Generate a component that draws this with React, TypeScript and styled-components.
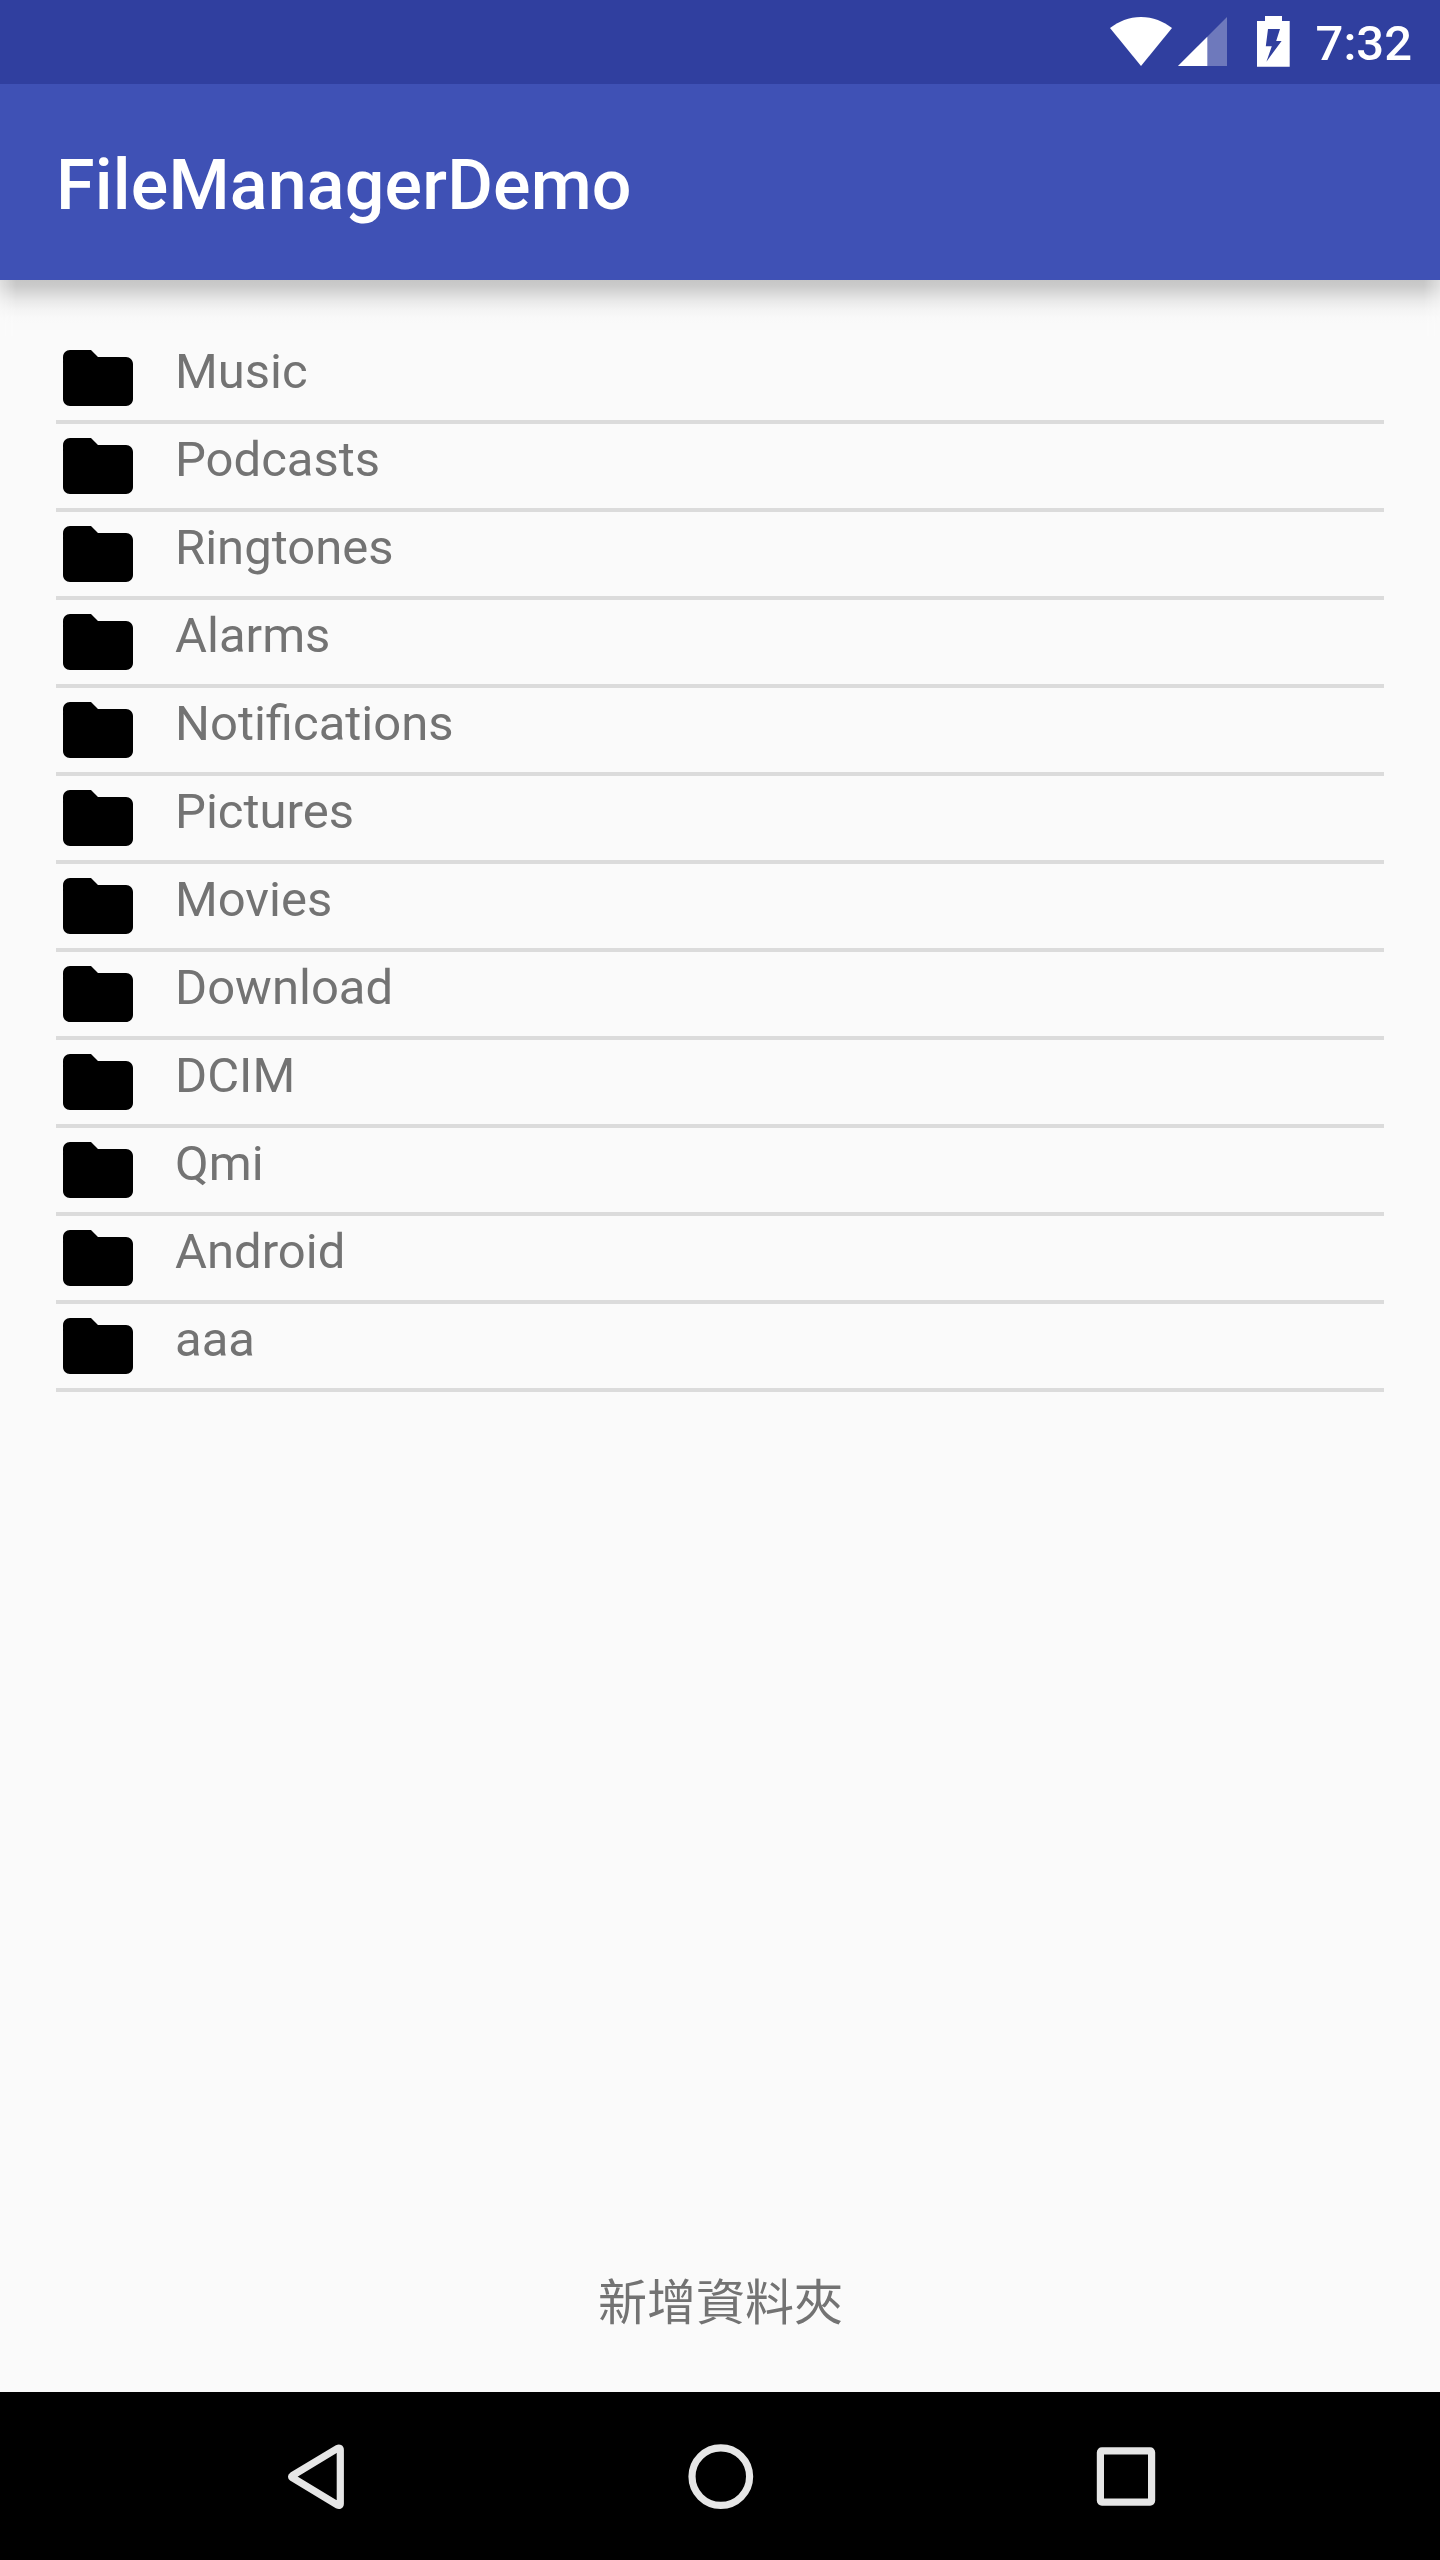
import React from "react";
import styled, { createGlobalStyle } from "styled-components";

const GlobalStyle = createGlobalStyle`
  html, body { margin: 0; padding: 0; background: #fafafa; }
`;

const Screen = styled.div`
  width: 1440px;
  height: 2560px;
  display: flex;
  flex-direction: column;
  overflow: hidden;
  background: #fafafa;
  color: #737373;
  font-family: Roboto, "Noto Sans CJK TC", sans-serif;
  font-size: 49px;
`;

const StatusBar = styled.header`
  flex: none;
  height: 84px;
  box-sizing: border-box;
  padding-right: 28px;
  display: flex;
  justify-content: flex-end;
  background: #303f9f;
  color: #fff;
`;

const StatusIcons = styled.svg`
  display: block;
  width: 210px;
  height: 84px;
`;

const Clock = styled.time`
  width: 102px;
  padding-top: 15px;
  line-height: 58px;
  font-weight: 500;
  text-align: right;
`;

const AppBar = styled.div`
  flex: none;
  height: 196px;
  box-sizing: border-box;
  padding: 6px 56px 0;
  display: flex;
  align-items: center;
  background: #3f51b5;
`;

const Title = styled.h1`
  margin: 0;
  color: #fff;
  font-size: 70px;
  font-weight: 500;
  line-height: 82px;
  letter-spacing: 0.17px;
`;

const Shadow = styled.div`
  flex: none;
  height: 56px;
  background: linear-gradient(#c6c6c6 0, #cbcbcb 6px, #d9d9d9 13px, #e9e9e9 21px, #f4f4f4 30px, #f9f9f9 38px, #fafafa 44px);
  mask-image: linear-gradient(90deg, rgba(0, 0, 0, 0.5), #000 16px, #000 calc(100% - 16px), rgba(0, 0, 0, 0.5));
`;

const FileList = styled.ul`
  flex: 1;
  margin: 0;
  padding: 0 56px;
  list-style: none;
`;

const FileRow = styled.li`
  height: 84px;
  display: flex;
  align-items: flex-start;
  border-bottom: 4px solid #dbdbdb;
`;

const FolderIcon = styled.svg`
  display: block;
  width: 84px;
  height: 84px;
  margin-right: 35px;
`;

const FileName = styled.span`
  padding-top: 7px;
  line-height: 58px;
`;

const AddFolder = styled.button`
  flex: none;
  height: 180px;
  padding: 0 0 7px 1px;
  border: 0;
  background: none;
  color: inherit;
  font: inherit;
`;

const NavBar = styled.nav`
  flex: none;
  height: 168px;
  display: flex;
  justify-content: center;
  background: #000;
`;

const NavIcon = styled.svg`
  display: block;
  width: 405px;
  height: 168px;
  fill: none;
  stroke: #e6e6e6;
  stroke-width: 7.2;
  stroke-linejoin: round;
`;

const folders = [
  "Music", "Podcasts", "Ringtones", "Alarms", "Notifications", "Pictures",
  "Movies", "Download", "DCIM", "Qmi", "Android", "aaa",
];

export default function App() {
  return (
    <Screen>
      <GlobalStyle />
      <StatusBar>
        <StatusIcons viewBox="1100 0 210 84" fill="#fff">
          <path d="M1141 66 1110 28C1118.500 21.500 1129 17 1141 17s22.500 4.500 31 11z" />
          <path d="M1227 17v49h-49z" opacity=".3" />
          <path d="M1207.300 36.700V66H1178z" />
          <path fillRule="evenodd" d="M1265 16h17v5h7.700v45.700H1257V21h8zM1268 29l-2.200 17.200h6l-5.400 15.500 15.200-20.700h-5.400l3.800-12z" />
        </StatusIcons>
        <Clock>7:32</Clock>
      </StatusBar>
      <AppBar>
        <Title>FileManagerDemo</Title>
      </AppBar>
      <Shadow />
      <FileList>
        {folders.map((name) => (
          <FileRow key={name}>
            <FolderIcon viewBox="0 0 24 24">
              <path d="M10 4H4c-1.100 0-1.990.9-1.990 2L2 18c0 1.100.9 2 2 2h16c1.100 0 2-.9 2-2V8c0-1.100-.9-2-2-2h-8l-2-2z" />
            </FolderIcon>
            <FileName>{name}</FileName>
          </FileRow>
        ))}
      </FileList>
      <AddFolder type="button">新增資料夾</AddFolder>
      <NavBar>
        <NavIcon viewBox="112.500 2392 405 168">
          <path d="M336.800 2448.500 291.800 2475.700q-1.500 1 0 2L336.800 2504.900q3 1.300 3-1.500v-53.400q0-2.800-3-1.500z" />
        </NavIcon>
        <NavIcon viewBox="517.500 2392 405 168">
          <circle cx="720.300" cy="2476.600" r="28.800" />
        </NavIcon>
        <NavIcon viewBox="922.500 2392 405 168">
          <rect x="1099.900" y="2450.900" width="51.200" height="51.200" rx="1.500" />
        </NavIcon>
      </NavBar>
    </Screen>
  );
}
